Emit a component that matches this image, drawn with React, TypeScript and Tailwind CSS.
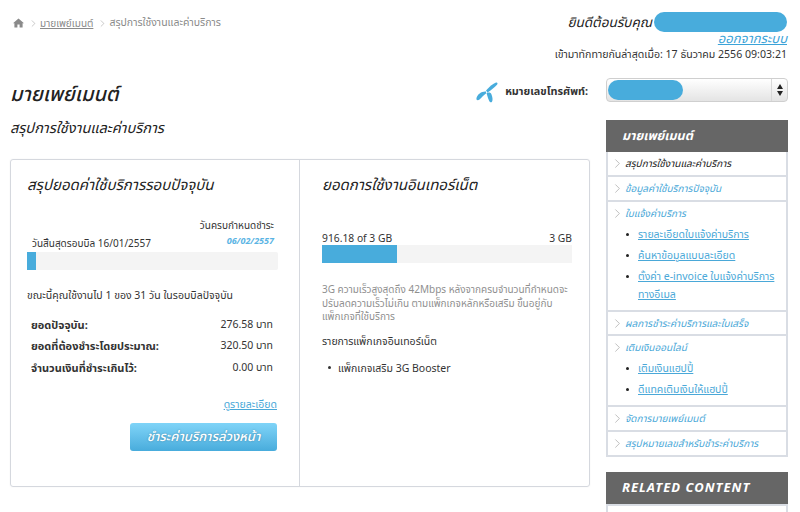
import React from 'react';
import { ChevronRight } from 'lucide-react';

const font = "font-['Noto_Sans','DejaVu_Sans','Noto_Sans_Thai','Tahoma',sans-serif]";

const Blob: React.FC<{ className: string }> = ({ className }) => (
  <div className={`bg-[#48acdc] rounded-full ${className}`} />
);

const HomeIcon = () => (
  <svg width="11" height="10" viewBox="0 0 11 10" fill="#8a8a8a">
    <path d="M5.5 0.5 L11 5.2 L9.6 5.2 L9.6 9.6 L6.6 9.6 L6.6 6.4 L4.4 6.4 L4.4 9.6 L1.4 9.6 L1.4 5.2 L0 5.2 Z" />
  </svg>
);

const LogoIcon = () => (
  <svg width="22" height="22" viewBox="0 0 22 22" fill="#48acdc" className="mt-[1px]">
    <path d="M10 10.5 C6 10 1.5 13 0.5 17 C0 19.5 2 19.8 3.5 18.5 C5.5 16.5 8 14 10 12.5 Z" />
    <path d="M10 9.5 C13 6 17 2.5 20 1.5 C21.5 1.2 22 2.5 21 3.8 C18.5 6.5 15 9.5 11.5 11.5 Z" />
    <path d="M10.5 12 C13 11 14.8 11.5 15.5 13.5 C16.5 16 17 19 16 20.8 C15 22 13.5 21 12.8 19 C11.8 16.5 11 14 10.5 12 Z" />
  </svg>
);

const SideItem: React.FC<{ label: string; active?: boolean; tight?: boolean; links?: string[][] }> = ({
  label,
  active,
  tight,
  links,
}) => (
  <div className={`border-b-2 border-[#d9dde4] px-[2px] pt-[3px] ${tight ? 'pb-[3px]' : 'pb-[4px]'}`}>
    <div className="flex items-center h-[16px]">
      <ChevronRight size={15} strokeWidth={1} className="text-[#9a9a9a] shrink-0" />
      <span className={`text-[10px] italic whitespace-nowrap ${active ? 'text-[#222222]' : 'text-[#4aa8d8]'}`}>{label}</span>
    </div>
    {links && (
      <ul className="pl-[16px] pt-[1px] pb-[3px]">
        {links.map(lines => (
          <li key={lines[0]} className="flex gap-[9px] pt-[3px]">
            <span className="w-[3px] h-[3px] rounded-full bg-[#222222] mt-[8px] shrink-0" />
            <span className="flex flex-col text-[10.5px] leading-[18px] text-[#4aa8d8]">
              {lines.map(line => (
                <span key={line} className="underline whitespace-nowrap">{line}</span>
              ))}
            </span>
          </li>
        ))}
      </ul>
    )}
  </div>
);

const AmountRow: React.FC<{ label: string; value: string }> = ({ label, value }) => (
  <div className="flex justify-between h-[21.5px] items-center pl-[4px] pr-[5px] text-[10.5px] text-[#333333]">
    <span className="font-bold text-[11px]">{label}</span>
    <span>{value}</span>
  </div>
);

const App: React.FC = () => {
  return (
    <div className={`${font} w-[800px] h-[512px] overflow-hidden bg-white text-[#222222]`}>
      {/* Header */}
      <div className="flex justify-between pl-[13px] pr-[13px] pt-[11px] h-[76px]">
        <div className="flex items-center gap-[6px] h-[24px] text-[10px] text-[#8a8a8a]">
          <HomeIcon />
          <ChevronRight size={11} strokeWidth={1} className="-ml-[2px]" />
          <span className="underline -ml-[5px]">มายเพย์เมนต์</span>
          <ChevronRight size={11} strokeWidth={1} className="-ml-[2px]" />
          <span className="text-[10.5px] -ml-[5px]">สรุปการใช้งานและค่าบริการ</span>
        </div>
        <div className="flex flex-col items-end">
          <div className="flex items-center gap-[2px] h-[22px]">
            <span className="text-[13.5px] italic text-[#222222]">ยินดีต้อนรับคุณ</span>
            <Blob className="w-[133px] h-[20px]" />
          </div>
          <span className="text-[13px] leading-[12px] -mt-[1px] italic underline text-[#3ba3d8]">ออกจากระบบ</span>
          <span className="text-[10.6px] leading-[18px] mt-[1px] text-[#333333]">เข้ามาทักทายกันล่าสุดเมื่อ: 17 ธันวาคม 2556 09:03:21</span>
        </div>
      </div>

      <div className="flex pl-[10px] pr-[12px] gap-[16px]">
        {/* Main column */}
        <div className="w-[580px]">
          <div className="flex justify-between h-[83px]">
            <div className="flex flex-col">
              <h1 className="text-[20px] leading-[28px] mt-[4px] italic font-medium text-[#222222]">มายเพย์เมนต์</h1>
              <h2 className="text-[14.5px] leading-[24px] mt-[7px] italic text-[#222222]">สรุปการใช้งานและค่าบริการ</h2>
            </div>
            <div className="flex items-start gap-[7px] pt-[4px] pr-[2px]">
              <LogoIcon />
              <span className="text-[10.8px] font-bold leading-[22px] text-[#333333]">หมายเลขโทรศัพท์:</span>
            </div>
          </div>

          <div className="flex h-[328px] border border-[#d5d8de] rounded-[3px] shadow-[0_0_2px_rgba(0,0,0,0.06)]">
            {/* Billing */}
            <div className="w-[289px] border-r border-[#d5d8de] pl-[16px] pr-[21px]">
              <h3 className="text-[15px] leading-[24px] mt-[12px] italic text-[#222222]">สรุปยอดค่าใช้บริการรอบปัจจุบัน</h3>
              <div className="flex justify-between items-end mt-[17px] h-[38px] pl-[5px] pr-[4px]">
                <span className="text-[10px] leading-[16px] text-[#333333]">วันสิ้นสุดรอบบิล 16/01/2557</span>
                <div className="flex flex-col items-end">
                  <span className="text-[10px] leading-[15px] text-[#333333]">วันครบกำหนดชำระ</span>
                  <span className="text-[9px] leading-[15px] mb-[3px] italic font-bold text-[#5ab4e4]">06/02/2557</span>
                </div>
              </div>
              <div className="h-[18px] mt-[1px] bg-[#f4f4f4] rounded-[2px]">
                <div className="h-full w-[9px] bg-[#48acdc]" />
              </div>
              <p className="text-[10.5px] leading-[16px] mt-[17px] text-[#333333]">ขณะนี้คุณใช้งานไป 1 ของ 31 วัน ในรอบบิลปัจจุบัน</p>
              <div className="mt-[11px]">
                <AmountRow label="ยอดปัจจุบัน:" value="276.58 บาท" />
                <AmountRow label="ยอดที่ต้องชำระโดยประมาณ:" value="320.50 บาท" />
                <AmountRow label="จำนวนเงินที่ชำระเกินไว้:" value="0.00 บาท" />
              </div>
              <div className="text-right mt-[17px] pr-[1px] text-[10.5px] leading-[16px] underline text-[#4aa8d8]">ดูรายละเอียด</div>
              <div className="flex justify-end mt-[11px] pr-[1px]">
                <button className="w-[147px] h-[28px] rounded-[3px] bg-gradient-to-b from-[#7fd4f8] to-[#48acdc] text-white text-[13px] font-medium italic [text-shadow:0_0_2px_rgba(0,0,0,0.3)]">
                  ชำระค่าบริการล่วงหน้า
                </button>
              </div>
            </div>

            {/* Internet usage */}
            <div className="flex-1 pl-[22px] pr-[17px]">
              <h3 className="text-[15px] leading-[24px] mt-[12px] italic text-[#222222]">ยอดการใช้งานอินเทอร์เน็ต</h3>
              <div className="flex justify-between mt-[35px] text-[10.3px] leading-[14px] text-[#333333]">
                <span>916.18 of 3 GB</span>
                <span>3 GB</span>
              </div>
              <div className="h-[18px] bg-[#f4f4f4]">
                <div className="h-full w-[75px] bg-[#48acdc]" />
              </div>
              <p className="text-[10px] leading-[13.5px] mt-[20px] text-[#8f8f8f] whitespace-nowrap">
                3G ความเร็วสูงสุดถึง 42Mbps หลังจากครบจำนวนที่กำหนดจะ
                <br />
                ปรับลดความเร็วไม่เกิน ตามแพ็กเกจหลักหรือเสริม ขึ้นอยู่กับ
                <br />
                แพ็กเกจที่ใช้บริการ
              </p>
              <p className="text-[10.5px] leading-[16px] mt-[9px] text-[#333333]">รายการแพ็กเกจอินเทอร์เน็ต</p>
              <ul className="mt-[11px] pl-[6px] flex items-center gap-[7px] text-[10.5px] leading-[16px] text-[#333333]">
                <span className="w-[3px] h-[3px] rounded-full bg-[#333333]" />
                <li>แพ็กเกจเสริม 3G Booster</li>
              </ul>
            </div>
          </div>
        </div>

        {/* Sidebar */}
        <div className="w-[182px] shrink-0">
          <div className="relative h-[24px] mt-[2px] rounded-[4px] border border-[#cfcfcf] bg-gradient-to-b from-[#ffffff] to-[#e4e4e4] flex items-center justify-end">
            <Blob className="absolute left-[1px] top-[1px] w-[75px] h-[20px]" />
            <div className="w-[16px] h-full border-l border-[#d8d8d8] flex flex-col items-center justify-center gap-[2px]">
              <span className="w-0 h-0 border-x-[3px] border-x-transparent border-b-[5px] border-b-[#222222]" />
              <span className="w-0 h-0 border-x-[3px] border-x-transparent border-t-[5px] border-t-[#222222]" />
            </div>
          </div>

          <div className="mt-[18px] h-[32px] bg-[#666666] flex items-center pl-[16px]">
            <span className="text-[12.5px] font-bold italic text-white">มายเพย์เมนต์</span>
          </div>
          <div className="border-x-2 border-[#d9dde4]">
            <SideItem label="สรุปการใช้งานและค่าบริการ" active />
            <SideItem label="ข้อมูลค่าใช้บริการปัจจุบัน" />
            <SideItem
              label="ใบแจ้งค่าบริการ"
              links={[
                ['รายละเอียดใบแจ้งค่าบริการ'],
                ['ค้นหาข้อมูลแบบละเอียด'],
                ['ตั้งค่า e-invoice ใบแจ้งค่าบริการ', 'ทางอีเมล'],
              ]}
            />
            <SideItem label="ผลการชำระค่าบริการและใบเสร็จ" tight />
            <SideItem label="เติมเงินออนไลน์" links={[['เติมเงินแฮปปี้'], ['ดีแทคเติมเงินให้แฮปปี้']]} />
            <SideItem label="จัดการมายเพย์เมนต์" />
            <SideItem label="สรุปหมายเลขสำหรับชำระค่าบริการ" />
          </div>

          <div className="mt-[15px] h-[32px] bg-[#666666] flex items-center pl-[16px]">
            <span className="text-[13px] font-bold italic tracking-[1px] text-white">RELATED CONTENT</span>
          </div>
          <div className="h-[20px] border-x-2 border-t-2 border-[#d9dde4]" />
        </div>
      </div>
    </div>
  );
};

export default App;
